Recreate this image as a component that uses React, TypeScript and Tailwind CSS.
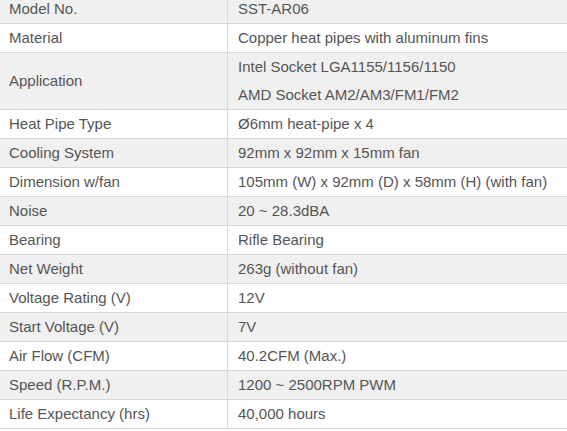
const specs: { label: string; value: string[] }[] = [
  { label: "Model No.", value: ["SST-AR06"] },
  { label: "Material", value: ["Copper heat pipes with aluminum fins"] },
  {
    label: "Application",
    value: ["Intel Socket LGA1155/1156/1150", "AMD Socket AM2/AM3/FM1/FM2"],
  },
  { label: "Heat Pipe Type", value: ["Ø6mm heat-pipe x 4"] },
  { label: "Cooling System", value: ["92mm x 92mm x 15mm fan"] },
  { label: "Dimension w/fan", value: ["105mm (W) x 92mm (D) x 58mm (H) (with fan)"] },
  { label: "Noise", value: ["20 ~ 28.3dBA"] },
  { label: "Bearing", value: ["Rifle Bearing"] },
  { label: "Net Weight", value: ["263g (without fan)"] },
  { label: "Voltage Rating (V)", value: ["12V"] },
  { label: "Start Voltage (V)", value: ["7V"] },
  { label: "Air Flow (CFM)", value: ["40.2CFM (Max.)"] },
  { label: "Speed (R.P.M.)", value: ["1200 ~ 2500RPM PWM"] },
  { label: "Life Expectancy (hrs)", value: ["40,000 hours"] },
];

export default function App() {
  return (
    <div className="w-[567px] h-[431px] overflow-hidden bg-white font-['Liberation_Sans',Arial,sans-serif] text-[15px] text-[#555555]">
      <div className="-mt-[5px]">
        {specs.map((s, i) => (
          <div
            key={s.label}
            className={`flex border-b border-[#d8d8d8] ${i % 2 === 0 ? "bg-[#f0f0f0]" : "bg-white"}`}
          >
            <div className="w-[228px] shrink-0 border-r border-[#d8d8d8] pl-[9px] flex items-center leading-[28px]">
              {s.label}
            </div>
            <div className="flex-1 pl-[10px] leading-[28px] whitespace-nowrap">
              {s.value.map((v) => (
                <div key={v}>{v}</div>
              ))}
            </div>
          </div>
        ))}
      </div>
    </div>
  );
}
